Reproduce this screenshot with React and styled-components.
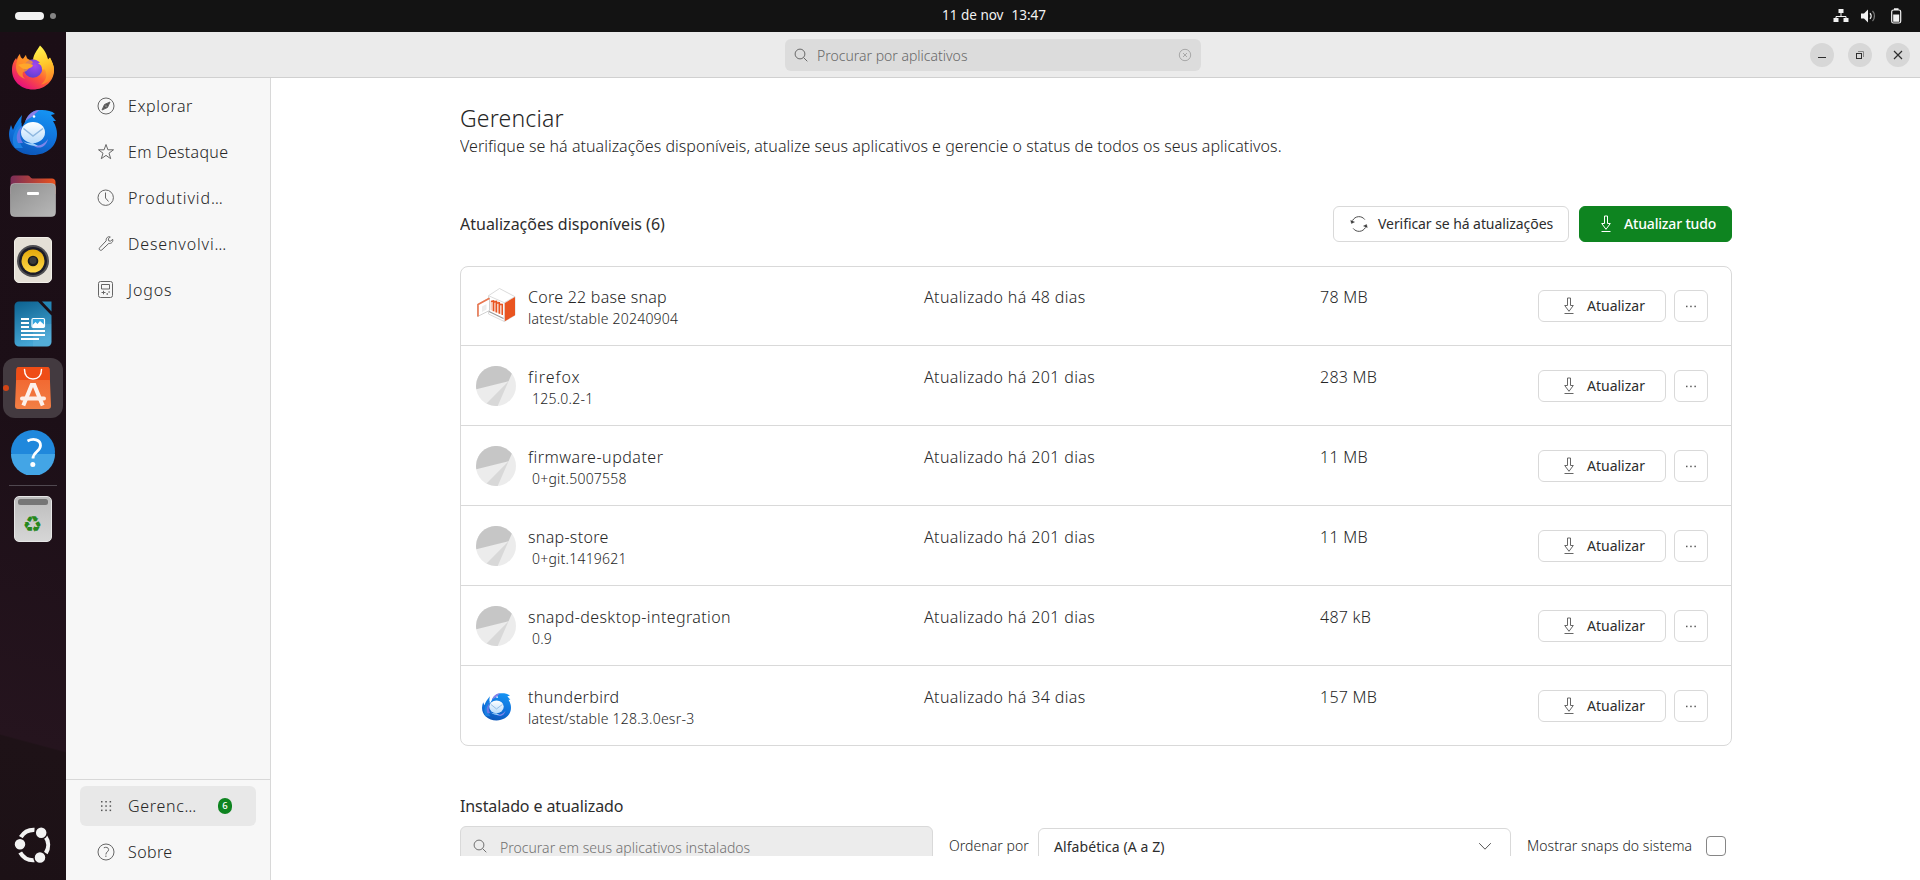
import React from "react";
import styled, { createGlobalStyle, css } from "styled-components";

const Global = createGlobalStyle`
  *, *::before, *::after { box-sizing: border-box; }
  html, body { margin: 0; padding: 0; overflow: hidden; background: #fff; }
  body { font-family: "Noto Sans", "Open Sans", sans-serif; color: #262626; }
  button { font-family: inherit; }
  svg { display: block; flex: none; }
`;

const Desktop = styled.div`
  width: 1920px;
  height: 880px;
  display: flex;
  flex-direction: column;
`;

const TopBar = styled.header`
  height: 32px;
  flex: none;
  background: #131313;
  color: #f2f2f2;
  display: grid;
  grid-template-columns: 1fr auto 1fr;
  align-items: center;
  padding: 0 15px;
`;
const Workspaces = styled.div`
  display: flex;
  align-items: center;
  gap: 6px;
`;
const Pill = styled.span`
  width: 29px;
  height: 8px;
  border-radius: 4px;
  background: #f2f2f2;
`;
const Dot = styled.span`
  width: 6px;
  height: 6px;
  border-radius: 50%;
  background: #858585;
`;
const Clock = styled.div`
  display: flex;
  gap: 8px;
  padding-left: 68px;
  font-size: 13.5px;
  line-height: 18px;
  letter-spacing: 0;
  white-space: nowrap;
  margin-top: -2px;
`;
const Tray = styled.div`
  display: flex;
  justify-content: flex-end;
  align-items: center;
  gap: 11px;
`;

const Body = styled.div`
  flex: 1;
  min-height: 0;
  display: flex;
`;

const Dock = styled.nav`
  width: 66px;
  flex: none;
  display: flex;
  flex-direction: column;
  align-items: center;
  padding: 6px 0 1px;
  background: linear-gradient(195deg, #1b0e16 0%, #1c0f17 45%, #25141e 83.1%, #1e1217 83.3%, #1c1116 100%);
`;
const DockItem = styled.div`
  position: relative;
  width: 60px;
  height: 60px;
  flex: none;
  margin-bottom: 4px;
  border-radius: 12px;
  display: flex;
  align-items: center;
  justify-content: center;
  background: ${(p) => (p.$active ? "#433a40" : "transparent")};
`;
const RunningDot = styled.span`
  position: absolute;
  left: 0;
  top: 27px;
  width: 6px;
  height: 6px;
  border-radius: 50%;
  background: #d34516;
`;
const DockRule = styled.div`
  width: 48px;
  height: 1px;
  flex: none;
  background: #504850;
  margin: -1px 0 3px;
`;
const DockSpacer = styled.div`
  flex: 1;
`;

const Window = styled.div`
  flex: 1;
  min-width: 0;
  display: flex;
  flex-direction: column;
`;
const TitleBar = styled.div`
  height: 46px;
  flex: none;
  background: #ebebeb;
  border-bottom: 1px solid #d0d0d0;
  display: flex;
  align-items: center;
  justify-content: space-between;
  padding: 0 10px 0 719px;
`;
const Search = styled.div`
  width: 416px;
  height: 32px;
  border-radius: 6px;
  background: #dcdcdc;
  color: #686868;
  display: flex;
  align-items: center;
  padding: 0 9px;
`;
const SearchText = styled.span`
  flex: 1;
  padding: 3px 0 0 ${(p) => p.$inset}px;
  font-weight: 300;
  font-size: 14px;
  line-height: 20px;
  letter-spacing: ${(p) => p.$track};
  white-space: nowrap;
`;
const Controls = styled.div`
  display: flex;
  gap: 14px;
`;
const Control = styled.button`
  width: 24px;
  height: 24px;
  padding: 0;
  border: 0;
  border-radius: 50%;
  background: #d7d7d7;
  display: flex;
  align-items: center;
  justify-content: center;
`;

const Split = styled.div`
  flex: 1;
  min-height: 0;
  display: flex;
`;
const Sidebar = styled.aside`
  width: 205px;
  flex: none;
  background: #f7f7f7;
  border-right: 1px solid #d8d8d8;
  display: flex;
  flex-direction: column;
  justify-content: space-between;
`;
const NavGroup = styled.div`
  display: flex;
  flex-direction: column;
  gap: 6px;
  padding: 8px 14px 0;
  ${(p) =>
    p.$bottom &&
    css`
      border-top: 1px solid #d8d8d8;
      padding: 6px 14px 8px;
    `}
`;
const NavItem = styled.div`
  height: 40px;
  border-radius: 6px;
  display: flex;
  align-items: center;
  padding: 0 24px 0 17px;
  background: ${(p) => (p.$selected ? "#e8e8e8" : "transparent")};
`;
const NavLabel = styled.span`
  flex: 1;
  padding-left: 13px;
  font-weight: 300;
  font-size: 16px;
  line-height: 24px;
  letter-spacing: ${(p) => p.$track};
  white-space: nowrap;
`;
const Badge = styled.span`
  width: 14px;
  height: 16px;
  border-radius: 7px;
  background: #0e8420;
  color: #fff;
  font-size: 9.5px;
  line-height: 16px;
  font-weight: 500;
  text-align: center;
`;

const Main = styled.main`
  flex: 1;
  min-width: 0;
  background: #fff;
  padding-left: 189px;
`;
const Viewport = styled.div`
  width: 1272px;
  height: 778px;
  overflow: hidden;
`;
const Title = styled.h1`
  margin: 0 0 1px;
  padding-top: 23px;
  font-weight: 300;
  font-size: 23px;
  line-height: 34px;
  letter-spacing: 0.2px;
`;
const Lead = styled.p`
  margin: 0;
  font-weight: 300;
  font-size: 16px;
  line-height: 20px;
  letter-spacing: 0.03px;
  white-space: nowrap;
`;
const SectionBar = styled.div`
  margin-top: 50px;
  height: 36px;
  display: flex;
  align-items: center;
`;
const SectionTitle = styled.h2`
  margin: 0;
  flex: 1;
  font-weight: 400;
  font-size: 16px;
  line-height: 22px;
  letter-spacing: ${(p) => p.$track};
  color: #2d2d2d;
`;
const Button = styled.button`
  height: ${(p) => (p.$small ? 32 : 36)}px;
  width: ${(p) => p.$w}px;
  margin-left: ${(p) => p.$gap || 0}px;
  padding: 0 0 0 ${(p) => p.$inset}px;
  border: 1px solid ${(p) => (p.$primary ? "#0e8420" : "#d9d9d9")};
  border-radius: 6px;
  background: ${(p) => (p.$primary ? "#0e8420" : "#fff")};
  color: ${(p) => (p.$primary ? "#fff" : "#2d2d2d")};
  font-weight: ${(p) => (p.$primary ? 500 : 400)};
  font-size: 14px;
  line-height: 20px;
  letter-spacing: ${(p) => p.$track};
  white-space: nowrap;
  display: flex;
  align-items: center;
  gap: ${(p) => p.$iconGap || 0}px;
`;

const Card = styled.div`
  margin-top: 24px;
  border: 1px solid #d9d9d9;
  border-radius: 8px;
`;
const Row = styled.div`
  display: grid;
  grid-template-columns: 52px 396px 396px 218px 128px 42px;
  height: 78px;
  padding-left: 15px;
  align-items: center;
  ${(p) =>
    !p.$first &&
    css`
      height: 80px;
      border-top: 1px solid #d9d9d9;
      padding-top: 1px;
    `}
`;
const AppIcon = styled.div`
  width: 40px;
  height: 40px;
  display: flex;
  align-items: center;
  justify-content: center;
`;
const Cell = styled.div`
  height: 78px;
  padding-top: 18px;
`;
const Line = styled.div`
  font-weight: 300;
  font-size: 16px;
  line-height: 24px;
  letter-spacing: ${(p) => p.$track};
  white-space: nowrap;
`;
const Version = styled.div`
  padding-left: ${(p) => (p.$indent ? 4 : 0)}px;
  font-weight: 300;
  font-size: 14px;
  line-height: 20px;
  letter-spacing: 0.23px;
  white-space: nowrap;
`;

const InstalledHead = styled.div`
  margin-top: 49px;
  height: 22px;
  display: flex;
`;
const Filters = styled.div`
  margin-top: 9px;
  display: flex;
  align-items: flex-start;
`;
const FilterInput = styled.div`
  width: 473px;
  height: 40px;
  border: 1px solid #d9d9d9;
  border-radius: 6px;
  background: #ececec;
  color: #707070;
  display: flex;
  align-items: center;
  padding: 0 12px;
`;
const FilterLabel = styled.span`
  width: ${(p) => p.$w}px;
  margin-left: 16px;
  padding-top: 10px;
  font-weight: 300;
  font-size: 14px;
  line-height: 20px;
  letter-spacing: 0.05px;
  white-space: nowrap;
`;
const Select = styled.div`
  width: 473px;
  height: 36px;
  margin-top: 2px;
  border: 1px solid #d9d9d9;
  border-radius: 6px;
  display: flex;
  align-items: center;
  justify-content: space-between;
  padding: 0 18px 0 15px;
  color: #2d2d2d;
  font-size: 14px;
  letter-spacing: 0.08px;
`;
const Checkbox = styled.span`
  width: 20px;
  height: 20px;
  margin: 10px 0 0 13px;
  border: 1px solid #868686;
  border-radius: 4px;
`;

/* ---------- dock icons ---------- */
const Firefox = () => (
  <svg width="44" height="46" viewBox="0 0 44 46">
    <defs>
      <linearGradient id="ffA" x1=".85" y1=".1" x2=".25" y2=".95">
        <stop offset="0" stopColor="#fff44f" />
        <stop offset=".3" stopColor="#ffb02e" />
        <stop offset=".6" stopColor="#ff5a36" />
        <stop offset="1" stopColor="#e5107c" />
      </linearGradient>
      <radialGradient id="ffB" cx=".6" cy=".35" r=".7">
        <stop offset="0" stopColor="#a547ef" />
        <stop offset="1" stopColor="#5b3fd0" />
      </radialGradient>
      <linearGradient id="ffC" x1=".4" y1="0" x2=".6" y2="1">
        <stop offset="0" stopColor="#fff44f" />
        <stop offset=".5" stopColor="#ffc52b" />
        <stop offset="1" stopColor="#ff7a2a" />
      </linearGradient>
    </defs>
    <path d="M9 9c0 3 1 4 3 5l3-4c0 3 2 5 6 5l8-1-1-12c5 4 7 8 9 13l2-2c2 4 4 8 4 12 0 11-9 19.500-21 19.500S1 36 1 25c0-6 2-9 4-12l1 2c0-2 1-4 3-6z" fill="url(#ffA)" />
    <circle cx="22" cy="23.500" r="9.300" fill="url(#ffB)" />
    <path d="M29 .500c5 5 7 9 8 14l2-2c2 4 4 8 4 12 0 8-6 14-13 15 5-4 7-9 4-15l-3 0c0-3-1-5-4-6l2-1c-2-2-4-3-7-3 1-6 4-9 7-14z" fill="url(#ffC)" />
    <path d="M9 9c0 3 1 4 3 5l3-4c0 4 3 5 6 6l1 2-8 4 4 1c-2 3-4 4-6 4-1 3 0 5 2 7-6-2-9-7-9-12 0-5 2-9 4-13z" fill="#ff9a24" opacity=".75" />
    <path d="M7 20c5-2 11-2 15 0 0 2-4 4-8 4-3 0-4-2-7-4z" fill="#ffa62b" />
  </svg>
);

const Bird = ({ size = 48 }) => (
  <svg width={size} height={size} viewBox="0 0 48 48">
    <defs>
      <linearGradient id="tbA" x1=".7" y1="0" x2=".4" y2="1">
        <stop offset="0" stopColor="#1593f2" />
        <stop offset=".6" stopColor="#1070da" />
        <stop offset="1" stopColor="#0c56b8" />
      </linearGradient>
      <linearGradient id="tbB" x1=".5" y1="0" x2=".5" y2="1">
        <stop offset="0" stopColor="#fff" />
        <stop offset="1" stopColor="#b9dcfb" />
      </linearGradient>
    </defs>
    <path d="M16 14c2-6 7-13 17-12 5 0 10 1 13 4l-4 1 5 6-3 0c3 5 4 9 4 13 0 12-10 21-24 21C10 47 0 38 0 26c0-3 1-6 2-9l2 5c2-6 5-10 9-15-1 5-1 8 0 12z" fill="url(#tbA)" />
    <path d="M6 40C1 33 5 20 13 15c-4 8-5 17 1 25z" fill="#1b80e2" />
    <path d="M9 35c-3-7 0-13 4-17-2 6-3 11 1 17z" fill="#6d78e6" />
    <path d="M16 14c2-6 7-12 15-12-5 3-6 6-10 8-2 1-4 2-5 4z" fill="#8a7fe8" />
    <path d="M22 36c5 3 12 2 17-5-2 8-9 12-17 5z" fill="#7d86ea" />
    <circle cx="25" cy="8.500" r="1.300" fill="#fff" />
    <ellipse cx="24" cy="24.500" rx="12" ry="10.500" fill="url(#tbB)" />
    <path d="M14 33c3 3 9 2 10 2l5 3c-5 0-12-1-15-5z" fill="#9ccffa" />
    <path d="M14.500 20.500 24 28l10-7.500" fill="none" stroke="#8fb8e0" strokeWidth="1.500" />
  </svg>
);

const Files = () => (
  <svg width="46" height="42" viewBox="0 0 46 42">
    <defs>
      <linearGradient id="flA">
        <stop offset="0" stopColor="#7a2d57" />
        <stop offset="1" stopColor="#e9531f" />
      </linearGradient>
      <linearGradient id="flB" x1="0" y1="0" x2="1" y2="1">
        <stop offset="0" stopColor="#8e8e8e" />
        <stop offset="1" stopColor="#b8b8b8" />
      </linearGradient>
    </defs>
    <path d="M4 .5h14c2 0 2.500 3 4.500 3H42c2 0 3.500 1.500 3.500 3.500v12H.5V4C.5 2 2 .5 4 .5z" fill="url(#flA)" />
    <rect x=".5" y="8.500" width="45" height="33" rx="4" fill="url(#flB)" stroke="#bdbdbd" strokeWidth=".6" />
    <rect x="17" y="17" width="12" height="3" rx="1" fill="#fff" />
  </svg>
);

const Speaker = () => (
  <svg width="38" height="46" viewBox="0 0 38 46">
    <defs>
      <linearGradient id="spA" x1="0" y1="0" x2="0" y2="1">
        <stop offset="0" stopColor="#e3a80b" />
        <stop offset="1" stopColor="#ffd94a" />
      </linearGradient>
    </defs>
    <rect x=".5" y=".5" width="37" height="45" rx="4.500" fill="#e4dfd6" stroke="#f2efe9" />
    <circle cx="19" cy="24" r="16" fill="#4f4e52" />
    <circle cx="19" cy="24" r="14" fill="#1c1c28" />
    <circle cx="19" cy="24" r="11.500" fill="url(#spA)" />
    <circle cx="19" cy="24" r="5.300" fill="#1c1c1c" />
    <circle cx="19" cy="23.500" r="3.500" fill="#3a3a3a" />
  </svg>
);

const Writer = () => (
  <svg width="38" height="46" viewBox="0 0 38 46">
    <defs>
      <linearGradient id="wrA" x1="0" y1="0" x2=".3" y2="1">
        <stop offset="0" stopColor="#0c618f" />
        <stop offset="1" stopColor="#46a7d6" />
      </linearGradient>
    </defs>
    <path d="M5 .5h19l13.500 14V41a4.500 4.500 0 0 1-4.500 4.500H5A4.500 4.500 0 0 1 .5 41V5A4.500 4.500 0 0 1 5 .5z" fill="url(#wrA)" />
    <path d="M19 23h18.500v18a4.500 4.500 0 0 1-4.500 4.500H19z" fill="#fff" opacity=".07" />
    <path d="M28 .5h9.500v10z" fill="#2486b5" />
    <path d="M7 18h8M7 22h8M7 26h8M7 30h24M7 34h24M7 38h18" stroke="#fff" strokeWidth="2" />
    <rect x="18" y="17.500" width="12.500" height="9" rx="1.200" fill="#35a5dd" stroke="#fff" strokeWidth="1.200" />
    <path d="M18.500 26v-2l3-3 2 2 2.500-3 4.500 4v2z" fill="#fff" />
  </svg>
);

const AppCenter = () => (
  <svg width="36" height="42" viewBox="0 0 36 42">
    <defs>
      <linearGradient id="acA" x1="0" y1="0" x2="0" y2="1">
        <stop offset="0" stopColor="#f1602a" />
        <stop offset="1" stopColor="#f27f45" />
      </linearGradient>
    </defs>
    <path d="M4 0h28a2.500 2.500 0 0 1 2.500 2.500L36 39a3 3 0 0 1-3 3H3a3 3 0 0 1-3-3L1.500 2.500A2.500 2.500 0 0 1 4 0z" fill="url(#acA)" />
    <path d="M4 0h28a2.500 2.500 0 0 1 2.500 2.500L35 13H1L1.500 2.500A2.500 2.500 0 0 1 4 0z" fill="#ef4d16" />
    <path d="M9.500 2.500c0 6 3.500 9.500 8.500 9.500s8.500-3.500 8.500-9.500" fill="none" stroke="#fff" strokeWidth="1.500" strokeLinecap="round" />
    <path d="M8.300 38.500 16.700 18h2.600l8.400 20.500" fill="none" stroke="#fdf1eb" strokeWidth="4" />
    <rect x="5" y="29.500" width="26" height="4" rx="2" fill="#fdeee7" />
  </svg>
);

const Help = () => (
  <svg width="46" height="46" viewBox="0 0 46 46">
    <circle cx="23" cy="23" r="22" fill="#2088dc" />
    <path d="M1 25a22 22 0 0 0 44 0z" fill="#43a5e6" />
    <path d="M17.500 12c6-3 13-1.500 13 4.500 0 6-7.500 6-7.500 13" fill="none" stroke="#fff" strokeWidth="2.800" />
    <circle cx="22.800" cy="35.500" r="2.500" fill="#fff" />
  </svg>
);

const BinBody = styled.div`
  width: 38px;
  height: 46px;
  border: 1px solid #e6e6e6;
  border-radius: 5px;
  background: linear-gradient(#bdbdbd, #d6d6d6);
  padding: 2px 3px 0;
`;
const BinSlot = styled.div`
  height: 6px;
  border-radius: 2.5px;
  background: #767676;
`;
const Recycle = styled.div`
  margin-top: 8px;
  font-family: "DejaVu Sans", sans-serif;
  font-size: 22px;
  line-height: 24px;
  text-align: center;
  color: #26881c;
  text-indent: -1px;
`;
const Trash = () => (
  <BinBody>
    <BinSlot />
    <Recycle>♻</Recycle>
  </BinBody>
);

const Ubuntu = () => (
  <svg width="38" height="38" viewBox="0 0 38 38">
    <g fill="none" stroke="#f2f2f2" strokeWidth="4.200">
      <path d="M6.800 11.200A15.200 15.200 0 0 1 20.500 3.800" />
      <path d="M31.200 10.200a15.200 15.200 0 0 1 .6 17" />
      <path d="M20.500 34.200A15.200 15.200 0 0 1 6.200 26.500" />
    </g>
    <g fill="#f2f2f2" stroke="#1d1217" strokeWidth="1.500">
      <circle cx="6" cy="18.200" r="6" />
      <circle cx="27.200" cy="6.800" r="6" />
      <circle cx="26" cy="31.500" r="6" />
    </g>
  </svg>
);

/* ---------- tray icons ---------- */
const Network = () => (
  <svg width="16" height="16" viewBox="0 0 16 16">
    <path d="M8 5v4M3 12V8.500h10V12" fill="none" stroke="#f2f2f2" strokeWidth="1" />
    <path d="M5.500 1h5v4h-5zM.5 10h5v4h-5zM10.500 10h5v4h-5z" fill="#f2f2f2" />
  </svg>
);
const Volume = () => (
  <svg width="16" height="16" viewBox="0 0 16 16">
    <path d="M1 5.500h3L8 1.500v13L4 10.500H1z" fill="#f2f2f2" />
    <path d="M10 5.200c1.400 1.500 1.400 4.100 0 5.600" fill="none" stroke="#f2f2f2" strokeWidth="1.400" />
    <path d="M12.500 3c2.600 2.600 2.600 7.400 0 10" fill="none" stroke="#777" strokeWidth="1.300" />
  </svg>
);
const Battery = () => (
  <svg width="18" height="16" viewBox="0 0 18 16">
    <rect x="4.700" y="2" width="9" height="13" rx="1.800" fill="none" stroke="#f2f2f2" strokeWidth="1.200" />
    <path d="M7 .2h4.500V2H7zM6.200 6.500h6v7.200h-6z" fill="#f2f2f2" />
  </svg>
);

/* ---------- line icons ---------- */
const Stroke = ({ size = 18, box = 18, color = "#666", children }) => (
  <svg width={size} height={size} viewBox={`0 0 ${box} ${box}`} fill="none" stroke={color} strokeWidth="1">
    {children}
  </svg>
);
const Magnifier = () => (
  <Stroke size={14} box={14} color="currentColor">
    <circle cx="6" cy="6" r="4.900" />
    <path d="M9.500 9.500l3.800 3.800" />
  </Stroke>
);
const Compass = () => (
  <Stroke>
    <circle cx="9" cy="9" r="8" />
    <path d="M13 5l-2.500 5.500L5 13l2.500-5.500z" fill="#555" />
    <circle cx="9" cy="9" r=".6" fill="#fff" stroke="none" />
  </Stroke>
);
const Star = () => (
  <Stroke>
    <path d="M9 1.500l1.900 5.300h5.600l-4.500 3.400 1.700 5.500L9 12.400l-4.700 3.300L6 10.200 1.500 6.800h5.600z" />
  </Stroke>
);
const ClockIcon = () => (
  <Stroke>
    <circle cx="8.700" cy="8.700" r="7.700" />
    <path d="M8.500 3.500V9l3 3.500" />
  </Stroke>
);
const Wrench = () => (
  <Stroke>
    <path d="M15.600 4.200l-2 2-1.900-.4-.4-1.900 2-2c-2-.8-4.600.8-4.100 3.900L2.800 12.600c-1.600 1.500.6 3.800 2.200 2.200l6.800-6.400c2.800.5 4.700-2 3.800-4.200z" />
  </Stroke>
);
const GameBoy = () => (
  <Stroke>
    <rect x="1.500" y=".5" width="14" height="16" rx="2" />
    <path d="M4.500 3.500h8v4.500h-8zM4.500 11.500h4M6.500 9.800v3.500" />
    <path d="M9.500 13h1.500M11.500 11h1.200" strokeWidth="1.500" />
  </Stroke>
);
const GridDots = () => (
  <svg width="18" height="18" viewBox="0 0 18 18" fill="#555">
    {[4, 8.3, 12.6].map((y) =>
      [4, 8.3, 12.6].map((x) => <rect key={`${x}-${y}`} x={x} y={y} width="1.500" height="1.500" />)
    )}
  </svg>
);
const Question = () => (
  <Stroke>
    <circle cx="9" cy="9" r="8" />
    <path d="M6.800 4.800c2-1 4.800-.5 4.800 1.800 0 2.200-2.700 2.200-2.700 4.900" />
    <path d="M8.900 12.500v1.500" />
  </Stroke>
);
const ClearIcon = () => (
  <Stroke size={14} box={14} color="#a8a8a8">
    <circle cx="7" cy="7" r="5.700" />
    <path d="M5 5l4 4M9 5l-4 4" />
  </Stroke>
);
const Sync = () => (
  <Stroke color="#3b3b3b">
    <path d="M2.600 5.500A7.200 7.200 0 0 1 14.800 4.600M15.400 12.500A7.200 7.200 0 0 1 3.200 13.400" strokeWidth=".9" />
    <path d="M2.200 7V5.800M15.800 11v1.200" />
    <path d="M.7 5.500l.8 3 3-1.500zM17.300 12.500l-.8-3-3 1.500z" fill="#3b3b3b" strokeWidth=".4" />
  </Stroke>
);
const Download = ({ color = "#666" }) => (
  <svg width="12" height="18" viewBox="0 0 12 18" fill="none" stroke={color} strokeWidth="1">
    <path d="M4.500 1h3v7.500h2.800L6 14.300 1.700 8.500h2.800z" />
    <path d="M1.500 16.500h9" />
  </svg>
);
const Dots = () => (
  <svg width="12" height="3" viewBox="0 0 12 3" fill="#5a5a5a">
    <rect x="1" y=".7" width="1.500" height="1.500" />
    <rect x="5.200" y=".7" width="1.500" height="1.500" />
    <rect x="9.400" y=".7" width="1.500" height="1.500" />
  </svg>
);
const Chevron = () => (
  <svg width="14" height="9" viewBox="0 0 14 9" fill="none" stroke="#555">
    <path d="M1.200 1.200L7 7.200l5.800-6" />
  </svg>
);

/* ---------- app icons ---------- */
const CoreIcon = () => (
  <svg width="40" height="40" viewBox="0 0 40 40">
    <path d="M12.500 9.700l11-7.200L39 10.700v18.500L28.300 35.500 12.500 28z" fill="#fff" stroke="#d2d2d2" strokeWidth=".8" />
    <path d="M12.500 9.700l15.800 7L39 10.700M28.300 16.700v18.800" fill="none" stroke="#d2d2d2" strokeWidth=".8" />
    <path d="M28.800 17L39 11v18.200L28.800 35.200z" fill="#e95420" />
    <path d="M14.500 15l6-1 6.500 4.500v10.500L14.500 24z" fill="#f6cfc0" />
    <path d="M15 15.500l2.500-.7v10.500M18 16l2.300-.5v11M21 17l2.300-.2v11M24 18.500l2.300 0v10.500" fill="none" stroke="#e95420" strokeWidth="1.400" />
    <path d="M13 25.500l14.500 7" stroke="#9a9a9a" strokeWidth="1.100" />
    <path d="M1.500 18.500L13.500 12v12.500L1.500 30.500z" fill="#fff" stroke="#c4c4c4" strokeWidth=".8" />
    <path d="M2 30.500v-12L13.500 12.200" fill="none" stroke="#e9764f" strokeWidth="1.600" />
    <path d="M6 20.500l4.500-2.500v5.500L6 26z" fill="#ececec" />
  </svg>
);
const Placeholder = () => (
  <svg width="40" height="40" viewBox="0 0 40 40">
    <circle cx="20" cy="20" r="20" fill="#ececec" />
    <path d="M.3 23.300A20 20 0 0 1 35.800 7.700L32.500 15.300z" fill="#c6c6c6" />
    <path d="M32.500 15.300L21.700 39.900A20 20 0 0 1 10.500 37.600z" fill="#d8d8d8" />
  </svg>
);

const NAV = [
  { label: "Explorar", icon: Compass, track: "0.55px" },
  { label: "Em Destaque", icon: Star, track: "0.3px" },
  { label: "Produtivid…", icon: ClockIcon, track: "0.9px" },
  { label: "Desenvolvi…", icon: Wrench, track: "0.85px" },
  { label: "Jogos", icon: GameBoy, track: "0.9px" },
];

const APPS = [
  { name: "Core 22 base snap", track: "0.25px", version: "latest/stable 20240904", date: "Atualizado há 48 dias", size: "78 MB", icon: <CoreIcon /> },
  { name: "firefox", track: "1px", version: "125.0.2-1", indent: true, date: "Atualizado há 201 dias", size: "283 MB", icon: <Placeholder /> },
  { name: "firmware-updater", track: "0.5px", version: "0+git.5007558", indent: true, date: "Atualizado há 201 dias", size: "11 MB", icon: <Placeholder /> },
  { name: "snap-store", track: "0.3px", version: "0+git.1419621", indent: true, date: "Atualizado há 201 dias", size: "11 MB", icon: <Placeholder /> },
  { name: "snapd-desktop-integration", track: "0.39px", version: "0.9", indent: true, date: "Atualizado há 201 dias", size: "487 kB", icon: <Placeholder /> },
  { name: "thunderbird", track: "0.35px", version: "latest/stable 128.3.0esr-3", date: "Atualizado há 34 dias", size: "157 MB", icon: <Bird size={29} /> },
];

export default function App() {
  return (
    <Desktop>
      <Global />
      <TopBar>
        <Workspaces>
          <Pill />
          <Dot />
        </Workspaces>
        <Clock>
          <span>11 de nov</span>
          <span>13:47</span>
        </Clock>
        <Tray>
          <Network />
          <Volume />
          <Battery />
        </Tray>
      </TopBar>
      <Body>
        <Dock>
          <DockItem><Firefox /></DockItem>
          <DockItem><Bird /></DockItem>
          <DockItem><Files /></DockItem>
          <DockItem><Speaker /></DockItem>
          <DockItem><Writer /></DockItem>
          <DockItem $active>
            <RunningDot />
            <AppCenter />
          </DockItem>
          <DockItem><Help /></DockItem>
          <DockRule />
          <DockItem><Trash /></DockItem>
          <DockSpacer />
          <DockItem><Ubuntu /></DockItem>
        </Dock>
        <Window>
          <TitleBar>
            <Search>
              <Magnifier />
              <SearchText $inset={9} $track="0px">Procurar por aplicativos</SearchText>
              <ClearIcon />
            </Search>
            <Controls>
              <Control>
                <svg width="10" height="10" viewBox="0 0 10 10"><path d="M1 7.500h8" stroke="#2d2d2d" /></svg>
              </Control>
              <Control>
                <svg width="10" height="10" viewBox="0 0 10 10" fill="none">
                  <path d="M3 1.500h5.500V7" stroke="#888" />
                  <rect x="1.500" y="3.500" width="5" height="5" stroke="#2d2d2d" />
                </svg>
              </Control>
              <Control>
                <svg width="10" height="10" viewBox="0 0 10 10"><path d="M1 1l8 8M9 1L1 9" stroke="#2d2d2d" strokeWidth="1.200" /></svg>
              </Control>
            </Controls>
          </TitleBar>
          <Split>
            <Sidebar>
              <NavGroup>
                {NAV.map(({ label, icon: Icon, track }) => (
                  <NavItem key={label}>
                    <Icon />
                    <NavLabel $track={track}>{label}</NavLabel>
                  </NavItem>
                ))}
              </NavGroup>
              <NavGroup $bottom>
                <NavItem $selected>
                  <GridDots />
                  <NavLabel $track="0.7px">Gerenc…</NavLabel>
                  <Badge>6</Badge>
                </NavItem>
                <NavItem>
                  <Question />
                  <NavLabel $track="0.4px">Sobre</NavLabel>
                </NavItem>
              </NavGroup>
            </Sidebar>
            <Main>
              <Viewport>
                <Title>Gerenciar</Title>
                <Lead>
                  Verifique se há atualizações disponíveis, atualize seus aplicativos e gerencie o status de todos os seus aplicativos.
                </Lead>
                <SectionBar>
                  <SectionTitle $track="0px">Atualizações disponíveis (6)</SectionTitle>
                  <Button $w={236} $inset={16} $iconGap={10} $track="-0.07px">
                    <Sync />
                    Verificar se há atualizações
                  </Button>
                  <Button $primary $w={153} $gap={10} $inset={20} $iconGap={12} $track="-0.17px">
                    <Download color="#fff" />
                    Atualizar tudo
                  </Button>
                </SectionBar>
                <Card>
                  {APPS.map((a, i) => (
                    <Row key={a.name} $first={i === 0}>
                      <AppIcon>{a.icon}</AppIcon>
                      <Cell>
                        <Line $track={a.track}>{a.name}</Line>
                        <Version $indent={a.indent}>{a.version}</Version>
                      </Cell>
                      <Cell>
                        <Line $track="0.36px">{a.date}</Line>
                      </Cell>
                      <Cell>
                        <Line $track="0.25px">{a.size}</Line>
                      </Cell>
                      <Button $small $w={128} $inset={24} $iconGap={12} $track="0px">
                        <Download />
                        Atualizar
                      </Button>
                      <Button $small $w={34} $gap={8} $inset={10}>
                        <Dots />
                      </Button>
                    </Row>
                  ))}
                </Card>
                <InstalledHead>
                  <SectionTitle $track="-0.1px">Instalado e atualizado</SectionTitle>
                </InstalledHead>
                <Filters>
                  <FilterInput>
                    <Magnifier />
                    <SearchText $inset={13} $track="0.02px">Procurar em seus aplicativos instalados</SearchText>
                  </FilterInput>
                  <FilterLabel $w={89}>Ordenar por</FilterLabel>
                  <Select>
                    Alfabética (A a Z)
                    <Chevron />
                  </Select>
                  <FilterLabel $w={166}>Mostrar snaps do sistema</FilterLabel>
                  <Checkbox />
                </Filters>
              </Viewport>
            </Main>
          </Split>
        </Window>
      </Body>
    </Desktop>
  );
}
